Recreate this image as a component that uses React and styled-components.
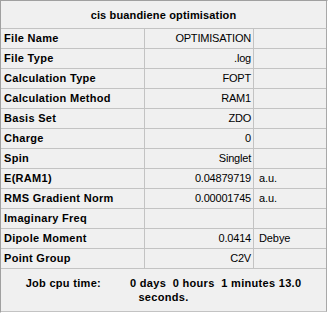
import React from "react";
import styled, { createGlobalStyle } from "styled-components";

const Global = createGlobalStyle`
  html, body { margin: 0; padding: 0; background: #f0f0f0; }
  body { font-family: "Liberation Sans", Arial, sans-serif; }
  *, *::before, *::after { box-sizing: border-box; }
`;

const Panel = styled.div`
  width: 328px;
  height: 313px;
  background: #f0f0f0;
  border-top: 1px solid #a0a0a0;
  border-left: 1px solid #a0a0a0;
  border-right: 1px solid #ffffff;
  border-bottom: 1px solid #ffffff;
  color: #000;
  font-size: 11px;
  display: flex;
  flex-direction: column;
`;

const Title = styled.div`
  height: 28px;
  line-height: 28px;
  border-bottom: 1px solid #c3c3c3;
  border-right: 1px solid #a8a8a8;
  text-align: center;
  font-weight: bold;
  letter-spacing: 0.15px;
`;

const Grid = styled.div`
  display: grid;
  grid-template-columns: 144px 109px 72px;
  border-right: 1px solid #a8a8a8;
`;

const Cell = styled.div`
  height: 20px;
  line-height: 19px;
  border-bottom: 1px solid #c3c3c3;
  border-right: ${(p) => (p.$last ? "none" : "1px solid #c3c3c3")};
  white-space: nowrap;
  overflow: hidden;
`;

const Label = styled(Cell)`
  font-weight: bold;
  letter-spacing: 0.3px;
  padding-left: 3px;
`;

const Value = styled(Cell)`
  text-align: right;
  letter-spacing: -0.2px;
  padding-right: 2px;
`;

const Unit = styled(Cell)`
  padding-left: 5px;
  letter-spacing: -0.1px;
`;

const Job = styled.div`
  height: 43px;
  border-bottom: 1px solid #c3c3c3;
  border-right: 1px solid #a8a8a8;
  padding-top: 7px;
  font-weight: bold;
  letter-spacing: 0.3px;
  line-height: 14px;
  display: flex;
  flex-direction: column;
  align-items: center;
`;

const JobLine = styled.div`
  display: flex;
  gap: 29px;
  white-space: pre;
`;

const rows = [
  ["File Name", "OPTIMISATION", ""],
  ["File Type", ".log", ""],
  ["Calculation Type", "FOPT", ""],
  ["Calculation Method", "RAM1", ""],
  ["Basis Set", "ZDO", ""],
  ["Charge", "0", ""],
  ["Spin", "Singlet", ""],
  ["E(RAM1)", "0.04879719", "a.u."],
  ["RMS Gradient Norm", "0.00001745", "a.u."],
  ["Imaginary Freq", "", ""],
  ["Dipole Moment", "0.0414", "Debye"],
  ["Point Group", "C2V", ""],
];

export default function App() {
  return (
    <>
      <Global />
      <Panel>
        <Title>cis buandiene optimisation</Title>
        <Grid>
          {rows.map(([l, v, u]) => (
            <React.Fragment key={l}>
              <Label>{l}</Label>
              <Value>{v}</Value>
              <Unit $last>{u}</Unit>
            </React.Fragment>
          ))}
        </Grid>
        <Job>
          <JobLine>
            <span>Job cpu time:</span>
            <span>0 days  0 hours  1 minutes 13.0</span>
          </JobLine>
          <JobLine>seconds.</JobLine>
        </Job>
      </Panel>
    </>
  );
}
